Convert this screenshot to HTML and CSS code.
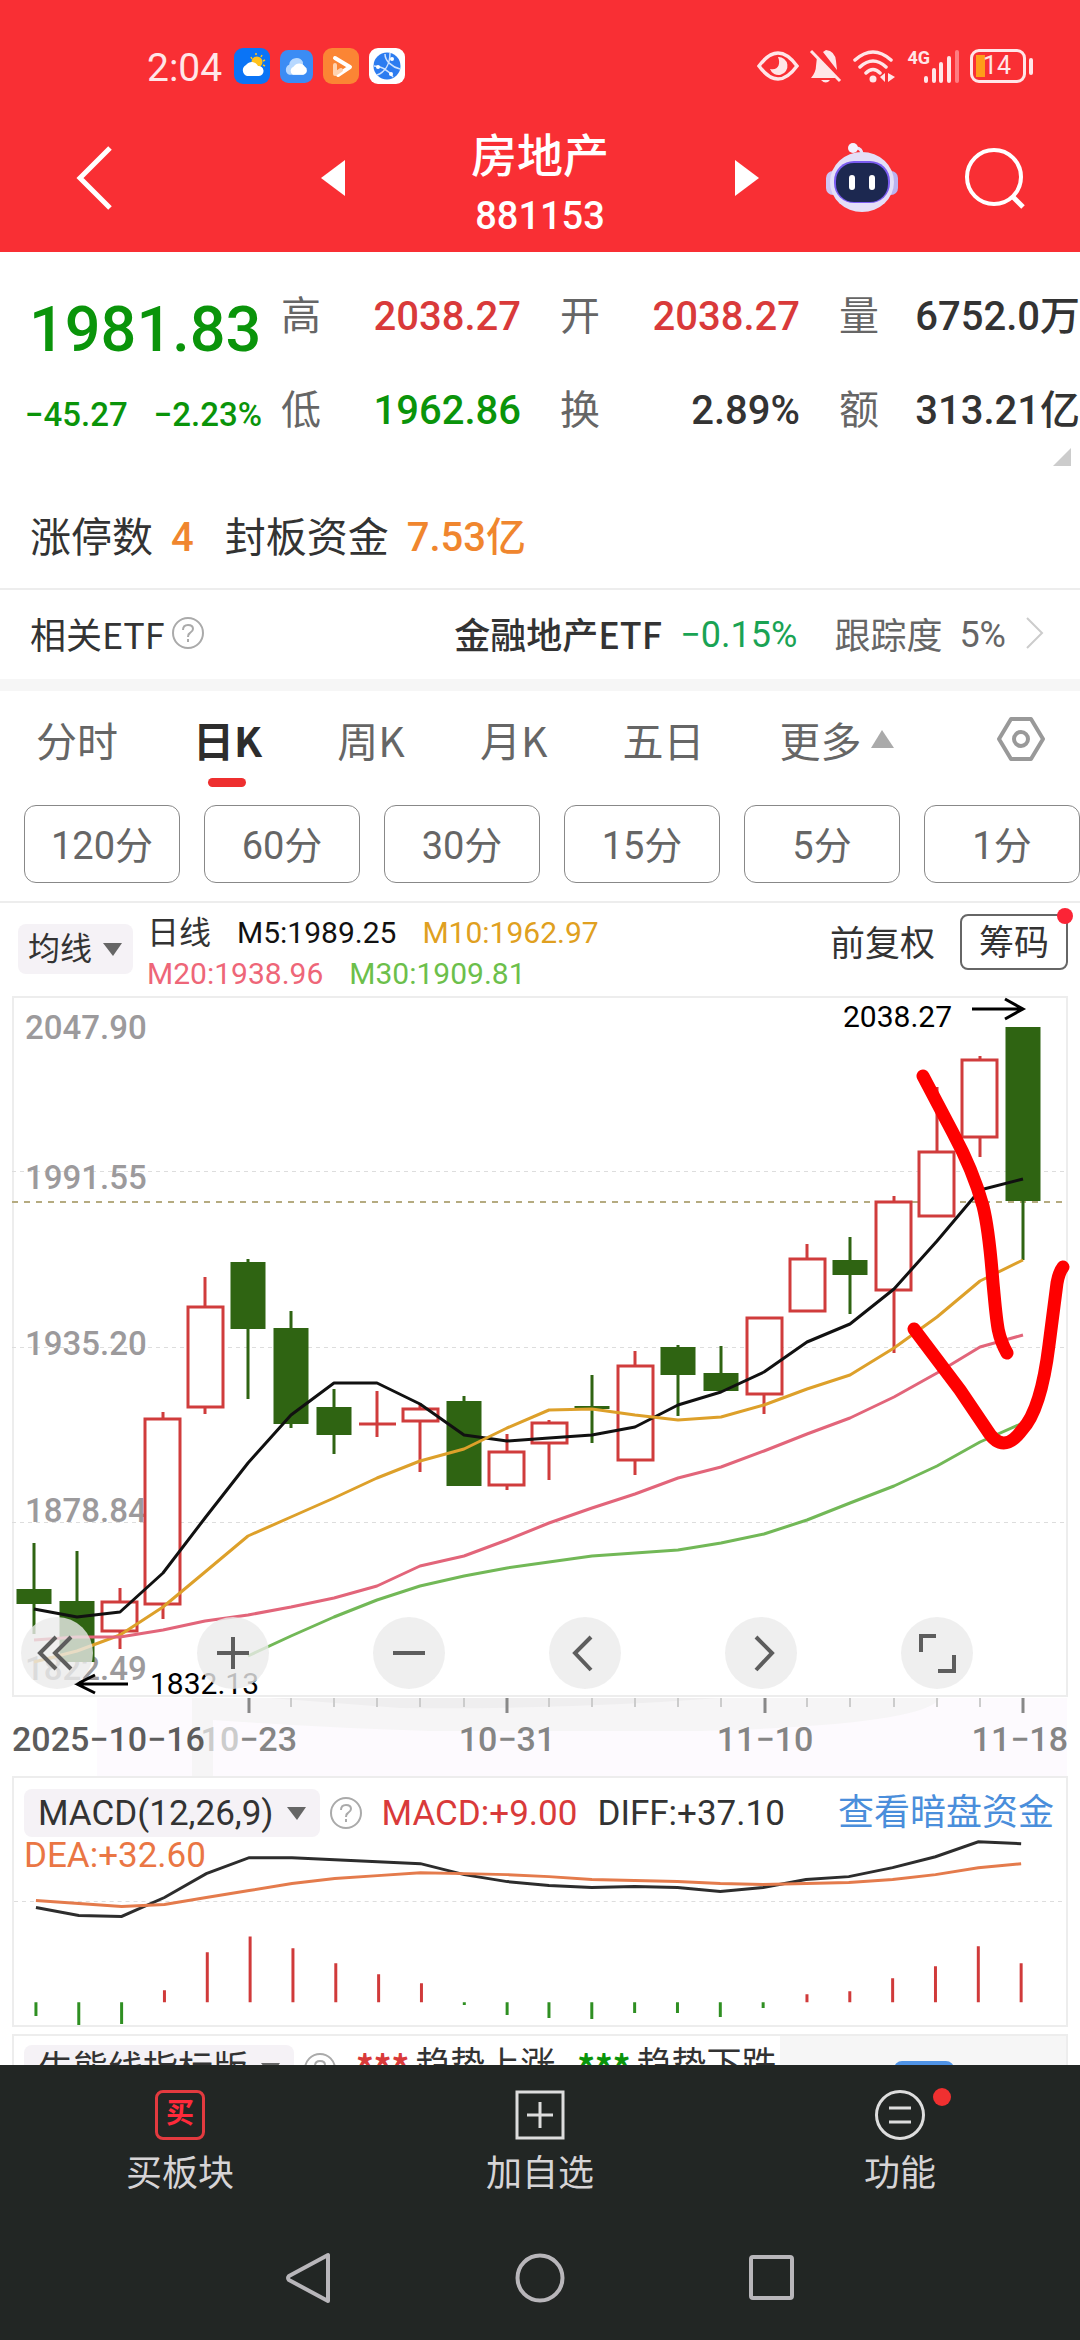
FILE: index.html
```html
<!DOCTYPE html>
<html lang="zh-CN">
<head>
<meta charset="utf-8">
<meta name="viewport" content="width=device-width, initial-scale=1">
<title>房地产 881153</title>
<link rel="stylesheet" href="styles.css">
</head>
<body>
<header class="top">
  <div class="status">
    <div class="status-left">
      <span class="clock">2:04</span>
      <svg class="app" viewBox="0 0 36 36"><rect width="36" height="36" rx="9" fill="#0a74f6"/><circle cx="23" cy="14" r="5.500" fill="#ffc21c"/><path d="M17 9l1 2M22 5v2M28 7l-1 2M31 12l-2 1M31 18l-2-1" stroke="#ffc21c" stroke-width="1.500"/><path d="M13 28a6 6 0 0 1-1-11 7 7 0 0 1 12 1 5 5 0 1 1 1 10z" fill="#fff"/></svg>
      <svg class="app app-small" viewBox="0 0 36 36"><rect width="36" height="36" rx="9" fill="#3b8cf4"/><path d="M10 27a6 6 0 0 1 0-11 8 8 0 0 1 15-3v14z" fill="#b7d8ff"/><path d="M14 27a5 5 0 0 1 1-9 7 7 0 0 1 12 0 5 5 0 0 1-1 9z" fill="#fff"/></svg>
      <svg class="app" viewBox="0 0 36 36"><rect width="36" height="36" rx="9" fill="#fb8534"/><path d="M12 10l15 9-12 8" fill="none" stroke="#fff" stroke-width="4" stroke-linecap="round" stroke-linejoin="round"/><path d="M12 17v9l6-4" fill="none" stroke="#ffd3b0" stroke-width="4" stroke-linecap="round" stroke-linejoin="round"/></svg>
      <svg class="app" viewBox="0 0 36 36"><rect width="36" height="36" rx="9" fill="#fff"/><circle cx="18" cy="18" r="13.500" fill="#2c7cf0"/><path d="M5 18c8 0 14 4 19 11M8 27c8-3 13-11 13-22M16 6c0 7 7 13 15 15" fill="none" stroke="#cfe3ff" stroke-width="1.500"/><circle cx="23" cy="11" r="2" fill="#fff"/><circle cx="9" cy="19" r="2" fill="#fff"/><circle cx="22" cy="26" r="2" fill="#fff"/></svg>
    </div>
    <div class="status-right">
      <svg width="42" height="36" viewBox="0 0 42 36"><path d="M2 18q19-26 38 0q-19 26-38 0z" fill="none" stroke="#ffe6e8" stroke-width="3.500"/><path d="M21 9a9 9 0 1 1-8 12c8 2 11-5 8-12z" fill="#ffe6e8"/></svg>
      <svg width="34" height="36" viewBox="0 0 34 36"><path d="M17 2q9 1 10 11l1 9-14-18zM8 9l20 21H2q5-6 5-12z" fill="#ffe6e8"/><path d="M2 3l29 30" stroke="#ffe6e8" stroke-width="3"/><path d="M12 32h9q-4 5-9 0z" fill="#ffe6e8"/></svg>
      <svg width="44" height="36" viewBox="0 0 44 36"><path d="M2 12q18-16 36 0M7 19q13-12 26 0M13 25q7-7 14 0" fill="none" stroke="#ffe6e8" stroke-width="3.500" stroke-linecap="round"/><circle cx="20" cy="31" r="3.500" fill="#ffe6e8"/><path d="M32 25v9l-5-5zM35 25v9l7-5z" fill="#ffe6e8"/></svg>
      <div class="signal"><span class="net">4G</span><svg width="36" height="36" viewBox="0 0 36 36"><path d="M2 30v3M10 22v11M17 16v17M25 10v23" stroke="#ffe6e8" stroke-width="4" stroke-linecap="round"/><path d="M33 4v29" stroke="#ff7d82" stroke-width="4" stroke-linecap="round"/></svg></div>
      <div class="battery"><span>14</span></div>
    </div>
  </div>
  <nav class="title-bar">
    <div class="side">
      <button class="icon-btn" aria-label="返回"><svg width="37" height="66" viewBox="0 0 37 66"><path d="M34 3L4 33l30 30" fill="none" stroke="#fff" stroke-width="5"/></svg></button>
      <button class="icon-btn" aria-label="上一个"><svg width="24" height="36" viewBox="0 0 24 36"><path d="M24 0v36L0 18z" fill="#fff"/></svg></button>
    </div>
    <div class="heading"><h1>房地产</h1><span>881153</span></div>
    <div class="side">
      <button class="icon-btn" aria-label="下一个"><svg width="24" height="36" viewBox="0 0 24 36"><path d="M0 0v36l24-18z" fill="#fff"/></svg></button>
      <button class="icon-btn" aria-label="智能助手"><svg width="74" height="70" viewBox="0 0 74 70"><path d="M37 12q0-7-6-7" fill="none" stroke="#e9e4fb" stroke-width="3"/><circle cx="28" cy="5" r="5" fill="#f4f1ff"/><rect x="1" y="28" width="14" height="24" rx="7" fill="#cfc5f4"/><rect x="59" y="28" width="14" height="24" rx="7" fill="#b9b3f0"/><ellipse cx="37" cy="39" rx="32" ry="30" fill="#e4dff8"/><rect x="9" y="18" width="56" height="42" rx="20" fill="#7a5cf0"/><rect x="11" y="20" width="52" height="39" rx="18" fill="#1c2850"/><path d="M27 35v9M47 35v9" stroke="#fff" stroke-width="6" stroke-linecap="round"/></svg></button>
      <button class="icon-btn" aria-label="搜索"><svg width="62" height="62" viewBox="0 0 62 62"><circle cx="30" cy="30" r="27" fill="none" stroke="#fff" stroke-width="4"/><path d="M49 50l10 10" stroke="#fff" stroke-width="5"/></svg></button>
    </div>
  </nav>
</header>

<main class="content">
  <section class="quote">
    <div class="last"><strong>1981.83</strong><div class="change"><span>−45.27</span><span>−2.23%</span></div></div>
    <dl class="stats">
      <div><dt>高</dt><dd class="up">2038.27</dd></div>
      <div><dt>开</dt><dd class="up">2038.27</dd></div>
      <div><dt>量</dt><dd>6752.0万</dd></div>
      <div><dt>低</dt><dd class="down">1962.86</dd></div>
      <div><dt>换</dt><dd>2.89%</dd></div>
      <div><dt>额</dt><dd>313.21亿</dd></div>
    </dl>
    <svg class="corner" width="18" height="18" viewBox="0 0 18 18"><path d="M18 0v18H0z" fill="#ccc"/></svg>
  </section>
  <section class="limit"><span>涨停数</span><b>4</b><span class="second">封板资金</span><b>7.53亿</b></section>
  <a class="etf" href="#etf">
    <span>相关ETF</span>
    <svg class="help" viewBox="0 0 34 34"><circle cx="17" cy="17" r="15" fill="none" stroke="#aaa" stroke-width="2"/><path d="M12 14q0-5 5-5t5 4q0 2-3 4-2 1-2 4M17 23v3" fill="none" stroke="#aaa" stroke-width="2"/></svg>
    <span class="etf-name">金融地产ETF</span><span class="etf-change">−0.15%</span><span class="etf-track">跟踪度</span><span class="etf-rate">5%</span>
    <svg width="18" height="32" viewBox="0 0 18 32"><path d="M1 1l15 15L1 31" fill="none" stroke="#ccc" stroke-width="2"/></svg>
  </a>
  <section class="periods">
    <div class="tabs">
      <div class="tab-list">
        <button>分时</button><button class="active">日K</button><button>周K</button><button>月K</button><button>五日</button><button>更多<svg width="23" height="18" viewBox="0 0 23 18"><path d="M11 0l12 18H0z" fill="#aaa"/></svg></button>
      </div>
      <button class="icon-btn" aria-label="设置"><svg width="48" height="46" viewBox="0 0 48 46"><path d="M14 3h20l12 20-12 20H14L2 23z" fill="none" stroke="#999" stroke-width="4" stroke-linejoin="round"/><circle cx="24" cy="23" r="7" fill="none" stroke="#999" stroke-width="4"/></svg></button>
    </div>
    <div class="minutes"><button>120分</button><button>60分</button><button>30分</button><button>15分</button><button>5分</button><button>1分</button></div>
  </section>

  <section class="indicator">
    <button class="chip">均线<svg width="19" height="13" viewBox="0 0 19 13"><path d="M0 0h19l-9 13z" fill="#666"/></svg></button>
    <div class="averages"><div><span class="cn">日线</span><span class="m5">M5:1989.25</span><span class="m10">M10:1962.97</span></div><div><span class="m20">M20:1938.96</span><span class="m30">M30:1909.81</span></div></div>
    <span class="adjust">前复权</span>
    <button class="chips-btn">筹码</button>
  </section>

  <section class="plot">
    <svg class="kline" viewBox="12 996 1056 702">
      <rect x="13" y="997" width="1054" height="699" fill="#fff" stroke="#ededed" stroke-width="2"/>
      <g stroke="#ddd" stroke-dasharray="4 4"><path d="M12 1171.500H1067M12 1347.500H1067M12 1522.500H1067"/></g>
      <path d="M12 1202H1067" stroke="#b5ab80" stroke-width="2" stroke-dasharray="6 6"/>
      <g class="axis-text"><text x="25" y="1039">2047.90</text><text x="25" y="1189">1991.55</text><text x="25" y="1355">1935.20</text><text x="25" y="1522">1878.84</text><text x="25" y="1680">1822.49</text></g>
      <path class="wick-down" d="M34 1543V1634M77 1551V1662M248 1259V1399M291 1311V1428M334 1389V1454M464 1396V1486M592 1375V1443M678 1345V1416M721 1346V1391M850 1237V1314M1023 1027V1260"/>
      <path class="body-down" d="M34 1589V1604M77 1601V1662M248 1262V1329M291 1328V1424M334 1407V1435M464 1401V1486M592 1406V1409M678 1347V1375M721 1373V1391M850 1260V1275M1023 1027V1201"/>
      <path class="up-line" d="M120 1588V1649M163 1412V1619M205 1277V1414M377 1391V1437M359 1424H396M420 1403V1472M507 1434V1490M549 1420V1480M635 1351V1475M764 1318V1414M807 1244V1311M894 1196V1353M937 1087V1216M980 1056V1157"/>
      <path class="up-line up-body" d="M102 1602h35v29h-35zM145 1419h35v185h-35zM188 1307h35v100h-35zM403 1409h35v12h-35zM489 1452h35v33h-35zM532 1423h35v20h-35zM618 1366h35v94h-35zM747 1318h35v76h-35zM790 1259h35v52h-35zM876 1202h35v88h-35zM919 1152h35v64h-35zM962 1060h35v77h-35z"/>
      <g class="average">
        <polyline stroke="#111" points="34,1609 77,1617 120,1612 163,1573 205,1518 248,1463 291,1415 334,1383 377,1383 420,1404 464,1435 507,1441 549,1438 592,1435 635,1427 678,1405 721,1392 764,1372 807,1342 850,1324 894,1289 937,1241 980,1190 1023,1179"/>
        <polyline stroke="#dda02a" points="34,1662 77,1651 120,1635 163,1607 205,1572 248,1536 291,1517 334,1498 377,1478 420,1461 464,1449 507,1428 549,1410 592,1409 635,1415 678,1420 721,1417 764,1405 807,1389 850,1375 894,1348 937,1317 980,1281 1023,1260"/>
        <polyline stroke="#e2657a" points="34,1640 77,1637 120,1637 163,1630 205,1621 248,1615 291,1607 334,1598 377,1586 420,1566 464,1556 507,1540 549,1523 592,1508 635,1494 678,1478 721,1467 764,1451 807,1434 850,1418 894,1397 937,1373 980,1347 1023,1335"/>
        <polyline stroke="#72b857" points="248,1656 291,1636 334,1617 377,1600 420,1586 464,1576 507,1568 549,1562 592,1556 635,1553 678,1550 721,1543 764,1534 807,1520 850,1503 894,1486 937,1466 980,1442 1023,1423"/>
      </g>
      <g class="mark-text"><text x="843" y="1027">2038.27</text><text x="150" y="1694">1832.13</text></g>
      <path d="M972 1009h50M1005 999l18 10-18 10M128 1684H78M95 1675l-18 9 18 9" fill="none" stroke="#000" stroke-width="3"/>
      <g class="pen"><path d="M923 1076L953 1133Q973 1170 983 1206Q989 1230 993 1283C997 1325 997 1335 1007 1353"/><path d="M914 1329L960 1390L987 1430Q1003 1456 1022 1430Q1041 1410 1049 1345L1057 1283Q1059 1272 1063 1267"/></g>
    </svg>
    <div class="tools">
      <button aria-label="最早"><svg viewBox="0 0 72 72"><path d="M35 20L19 36l16 16M50 20L34 36l16 16"/></svg></button>
      <button aria-label="放大"><svg viewBox="0 0 72 72"><path d="M36 20v32M20 36h32"/></svg></button>
      <button aria-label="缩小"><svg viewBox="0 0 72 72"><path d="M20 36h32"/></svg></button>
      <button aria-label="向左"><svg viewBox="0 0 72 72"><path d="M42 20L26 36l16 17"/></svg></button>
      <button aria-label="向右"><svg viewBox="0 0 72 72"><path d="M31 20l16 16-16 17"/></svg></button>
      <button aria-label="全屏"><svg viewBox="0 0 72 72"><path d="M35 19H20v16M53 38v16H37"/></svg></button>
    </div>
  </section>
  <svg class="dates" viewBox="0 1698 1080 78">
    <path d="M97 1698H1067V1776H97z" fill="#fdfafe"/>
    <path d="M192 1698H940Q925 1725 700 1731H430Q330 1728 213 1720V1776H192z" fill="#f6f5f6"/>
    <path d="M270 1698H720Q560 1710 400 1708Z" fill="#efeeef"/>
    <path d="M291 1698v9M334 1698v9M377 1698v9M420 1698v9M464 1698v9M549 1698v9M592 1698v9M635 1698v9M678 1698v9M721 1698v9M807 1698v9M850 1698v9M894 1698v9M937 1698v9M980 1698v9" stroke="#ccc" stroke-width="2"/>
    <path d="M249 1698v15M507 1698v15M765 1698v15M1023 1698v15" stroke="#888" stroke-width="3"/>
    <g class="axis-text date-text"><text class="first" x="12" y="1751">2025−10−16</text><text x="297" y="1751" text-anchor="end"><tspan class="faded">10</tspan>−23</text><text x="507" y="1751" text-anchor="middle">10−31</text><text x="765" y="1751" text-anchor="middle">11−10</text><text x="1068" y="1751" text-anchor="end">11−18</text></g>
  </svg>

  <section class="panel macd">
    <svg class="macd-plot" viewBox="12 1778 1056 248">
      <path d="M12 1902H1067" stroke="#ddd" stroke-dasharray="4 4"/>
      <path d="M34 2003V2017M77 2003V2027M120 2003V2025M464 2003V2006M507 2003V2016M549 2003V2019M592 2003V2020M635 2003V2014M678 2003V2014M721 2003V2018M764 2003V2009" stroke="#2f8f22" stroke-width="3"/>
      <path d="M163 2003V1991M206 2003V1953M249 2003V1937M292 2003V1949M335 2003V1964M378 2003V1975M421 2003V1984M808 2003V1995M851 2003V1992M894 2003V1979M937 2003V1967M980 2003V1947M1023 2003V1964" stroke="#d03a3a" stroke-width="3"/>
      <polyline fill="none" stroke="#2d2d2d" stroke-width="3" points="34,1908 77,1916 120,1917 163,1898 205,1874 248,1858 291,1858 334,1860 377,1862 420,1864 464,1875 507,1882 549,1886 592,1888 635,1887 678,1888 721,1892 764,1888 807,1880 850,1877 894,1868 937,1857 980,1842 1023,1844"/>
      <polyline fill="none" stroke="#e47b4c" stroke-width="3" points="34,1901 77,1904 120,1907 163,1905 205,1898 248,1891 291,1884 334,1879 377,1876 420,1873 464,1874 507,1875 549,1877 592,1880 635,1881 678,1882 721,1884 764,1885 807,1884 850,1883 894,1880 937,1875 980,1868 1023,1864"/>
    </svg>
    <div class="macd-head">
      <div class="macd-row">
        <button class="chip chip-wide">MACD(12,26,9)<svg width="19" height="13" viewBox="0 0 19 13"><path d="M0 0h19l-9 13z" fill="#666"/></svg></button>
        <svg class="help" viewBox="0 0 34 34"><circle cx="17" cy="17" r="15" fill="none" stroke="#aaa" stroke-width="2"/><path d="M12 14q0-5 5-5t5 4q0 2-3 4-2 1-2 4M17 23v3" fill="none" stroke="#aaa" stroke-width="2"/></svg>
        <span class="up">MACD:+9.00</span><span>DIFF:+37.10</span>
        <a href="#dark">查看暗盘资金</a>
      </div>
      <span class="dea">DEA:+32.60</span>
    </div>
  </section>
  <section class="panel trend">
    <div class="trend-main">
      <button class="chip chip-wide">牛熊线指标版<svg width="19" height="13" viewBox="0 0 19 13"><path d="M0 0h19l-9 13z" fill="#666"/></svg></button>
      <svg class="help" viewBox="0 0 34 34"><circle cx="17" cy="17" r="15" fill="none" stroke="#aaa" stroke-width="2"/><path d="M12 14q0-5 5-5t5 4q0 2-3 4-2 1-2 4M17 23v3" fill="none" stroke="#aaa" stroke-width="2"/></svg>
      <span class="legend"><i class="up">***</i>趋势上涨</span><span class="legend"><i class="down">***</i>趋势下跌</span>
    </div>
    <div class="trend-side"><span class="badge"></span></div>
  </section>
</main>

<footer class="bottom">
  <nav class="actions">
    <button><span class="buy">买</span>买板块</button>
    <button><svg width="50" height="50" viewBox="0 0 50 50"><path d="M2 2h46v46H2zM25 12v26M12 25h26" fill="none" stroke="#ddd" stroke-width="3"/></svg>加自选</button>
    <button><span class="func"><svg width="50" height="50" viewBox="0 0 50 50"><circle cx="25" cy="25" r="23.500" fill="none" stroke="#ddd" stroke-width="3"/><path d="M14 18h22M14 32h22" stroke="#ddd" stroke-width="3"/></svg></span>功能</button>
  </nav>
  <nav class="system">
    <button class="icon-btn" aria-label="后退"><svg width="48" height="52" viewBox="0 0 48 52"><path d="M43 3v46L4 28q-2-2 0-4z" fill="none" stroke="#b8b6ba" stroke-width="4" stroke-linejoin="round"/></svg></button>
    <button class="icon-btn" aria-label="主页"><svg width="52" height="52" viewBox="0 0 52 52"><circle cx="26" cy="26" r="22.500" fill="none" stroke="#b8b6ba" stroke-width="4"/></svg></button>
    <button class="icon-btn" aria-label="最近任务"><svg width="48" height="52" viewBox="0 0 48 52"><rect x="4" y="5" width="41" height="41" rx="2" fill="none" stroke="#b8b6ba" stroke-width="4"/></svg></button>
  </nav>
</footer>
</body>
</html>
```
FILE: styles.css
```css
* { box-sizing: border-box; }
body {
  margin: 0;
  height: 100vh;
  display: flex;
  flex-direction: column;
  background: #fff;
  color: #333;
  font-family: Roboto, "Noto Sans CJK SC", sans-serif;
  font-size: 36px;
  line-height: 1;
  white-space: nowrap;
}
button { border: 0; padding: 0; background: none; font: inherit; color: inherit; white-space: nowrap; }
a { color: inherit; text-decoration: none; }
svg { display: block; flex: none; }
.icon-btn { display: flex; }
.up { color: #d93a3a; }
.down { color: #0a940a; }

/* header */
.top { background: #f92f34; color: #fff; }
.status { height: 112px; padding: 20px 46px 0 147px; display: flex; justify-content: space-between; align-items: center; color: #ffe6e8; }
.status-left, .status-right { display: flex; align-items: center; gap: 10px; }
.clock { font-size: 39px; margin-right: 2px; padding-top: 4px; }
.app { width: 36px; height: 36px; }
.app-small { width: 33px; height: 33px; }
.signal { display: flex; align-items: flex-start; }
.net { font-size: 18px; font-weight: 700; line-height: 20px; margin-right: -6px; }
.battery { position: relative; width: 56px; height: 34px; margin-right: 8px; border: 3px solid #ffe6e8; border-radius: 9px; font-size: 25px; line-height: 28px; text-align: right; padding-right: 12px; background: linear-gradient(#ff9c1a, #ff9c1a) 3px 3px / 9px 22px no-repeat; }
.battery::after { content: ""; position: absolute; right: -10px; top: 6px; width: 4px; height: 17px; border-radius: 2px; background: #ffe6e8; }
.title-bar { height: 140px; padding: 0 54px 0 76px; display: grid; grid-template-columns: minmax(0, 269px) 1fr minmax(0, 291px); align-items: center; }
.side { display: flex; align-items: center; justify-content: space-between; padding-bottom: 8px; }
.heading { display: flex; flex-direction: column; align-items: center; gap: 18px; padding-top: 4px; font-size: 38px; font-weight: 500; }
.heading h1 { margin: 0; font-size: 46px; font-weight: 500; }

/* quote */
.content { flex: 1; min-height: 0; overflow: hidden; }
.quote { position: relative; height: 236px; display: grid; grid-template-columns: 281px 1fr; }
.last { padding: 46px 0 0 29px; color: #0a940a; }
.last strong { display: block; font-size: 63px; line-height: 64px; font-weight: 500; }
.change { display: flex; gap: 26px; margin: 36px 0 0 -4px; font-size: 33px; font-weight: 500; }
.stats { margin: 0; padding-top: 44px; display: grid; grid-template-columns: 240px 240px 1fr; column-gap: 39px; row-gap: 52px; align-content: start; font-size: 40px; line-height: 42px; }
.stats div { display: flex; justify-content: space-between; }
.stats dt { color: #666; }
.stats dd { margin: 0; font-weight: 500; }
.corner { position: absolute; right: 9px; bottom: 22px; }
.limit { height: 100px; padding: 0 30px; display: flex; align-items: center; font-size: 41px; }
.limit b { font-weight: 500; font-size: 40px; color: #f0862e; margin-left: 18px; }
.limit .second { margin-left: 31px; }
.etf { height: 103px; border-top: 2px solid #ededed; padding: 5px 36px 9px 30px; display: flex; align-items: center; border-bottom: 12px solid #f6f6f6; font-family: "Noto Sans CJK SC", Roboto, sans-serif; }
.help { width: 34px; height: 34px; margin-left: 6px; }
.etf-name { margin-left: auto; font-weight: 500; }
.etf-change, .etf-rate { font-family: Roboto, sans-serif; padding-top: 5px; }
.etf-change { color: #1aa354; margin-left: 18px; }
.etf-track { margin-left: 37px; color: #666; }
.etf-rate { margin: 0 20px 0 17px; color: #666; }

/* periods */
.periods { border-bottom: 2px solid #ededed; padding-bottom: 18px; color: #666; }
.tabs { height: 114px; padding: 0 35px 18px 36px; display: flex; align-items: center; justify-content: space-between; font-size: 41px; font-family: "Noto Sans CJK SC", sans-serif; }
.tab-list { width: 85%; display: flex; justify-content: space-between; }
.tab-list button { display: flex; align-items: center; gap: 9px; position: relative; }
.tab-list .active { font-weight: 700; color: #2d2d2d; }
.active::after { content: ""; position: absolute; left: 15px; right: 16px; top: 59px; height: 9px; border-radius: 5px; background: #ee2f2f; }
.minutes { padding-left: 24px; display: grid; grid-template-columns: repeat(6, 1fr); gap: 24px; }
.minutes button { height: 78px; border: 1px solid #888; border-radius: 12px; padding-top: 4px; font-size: 38px; }

/* moving averages */
.indicator { height: 93px; padding: 0 12px 0 18px; display: flex; align-items: flex-start; }
.chip { display: flex; align-items: center; gap: 11px; height: 50px; padding: 0 11px 0 10px; border-radius: 8px; background: #f5f2f6; font-size: 32px; margin-top: 21px; }
.averages { margin-left: 14px; padding-top: 9px; font-size: 30px; }
.averages div { display: flex; align-items: center; gap: 26px; height: 41px; }
.cn { font-size: 32px; }
.m5 { color: #111; }
.m10 { color: #e0a020; }
.m20 { color: #ee6678; }
.m30 { color: #6cbf4b; }
.adjust { margin: 24px 25px 0 auto; font-size: 35px; }
.chips-btn { position: relative; width: 108px; height: 56px; margin-top: 11px; padding-top: 2px; border: 2px solid #666; border-radius: 8px; font-size: 35px; }
.chips-btn::after { content: ""; position: absolute; right: -7px; top: -8px; width: 16px; height: 16px; border-radius: 50%; background: #fb2436; }

/* charts */
.plot { margin: 0 12px; display: grid; }
.kline, .tools { grid-area: 1 / 1; }
.kline { width: 100%; height: auto; overflow: visible; }
.axis-text { font-size: 33px; font-weight: 500; fill: #9c9a9c; }
.date-text { font-size: 34px; fill: #858585; }
.first { fill: #5c5c5c; }
.faded { fill: #ccc; }
.mark-text { font-size: 30px; fill: #000; }
.wick-down { stroke: #2f6412; stroke-width: 3; }
.body-down { stroke: #2f6412; stroke-width: 35; }
.up-line { stroke: #d03c3c; stroke-width: 3; fill: none; }
.up-body { fill: #fff; }
.average polyline { fill: none; stroke-width: 3; stroke-linejoin: round; }
.pen path { fill: none; stroke: #fe0000; stroke-width: 13; stroke-linecap: round; stroke-linejoin: round; }
.tools { align-self: end; display: flex; justify-content: space-between; padding: 0 95px 9px 9px; }
.tools button { width: 72px; height: 72px; border-radius: 50%; background: rgba(235, 235, 235, .8); }
.tools path { fill: none; stroke: #5d5d5d; stroke-width: 4; }
.dates { width: 100%; height: auto; }
.panel { margin: 0 12px; border: 2px solid #ededed; }
.macd { display: grid; }
.macd-plot, .macd-head { grid-area: 1 / 1; }
.macd-plot { width: 100%; height: auto; }
.macd-head { padding: 0 12px 0 10px; font-size: 35px; }
.macd-row { display: flex; align-items: center; height: 60px; padding-top: 10px; }
.chip-wide { height: 48px; margin: 0; padding: 0 14px; font-size: 35px; gap: 13px; }
.macd-row .help { margin: 0 19px 0 9px; }
.macd-row .up { margin-right: 20px; }
.macd-row a { margin-left: auto; color: #4a8edb; font-size: 36px; }
.dea { display: block; color: #ea7644; }
.trend { margin-top: 7px; display: grid; grid-template-columns: 766px 1fr; height: 80px; }
.trend-main { display: flex; align-items: center; padding: 0 0 10px 10px; font-size: 35px; }
.trend-main .help { margin: 0 19px 0 9px; }
.legend { display: flex; gap: 6px; margin-right: 22px; padding-bottom: 8px; }
.legend i { font-style: normal; font-weight: 700; font-family: "Noto Sans CJK SC", sans-serif; }
.trend-side { background: #f6f6f6; padding: 25px 0 0 114px; }
.badge { display: block; width: 60px; height: 30px; border-radius: 8px; background: #4f93e6; }

/* bottom bars */
.bottom { background: #222624; color: #d6d4d6; }
.actions { display: grid; grid-template-columns: repeat(3, 1fr); padding-top: 25px; }
.actions button { display: flex; flex-direction: column; align-items: center; gap: 14px; line-height: 40px; }
.buy { width: 50px; height: 50px; border: 3px solid #e33a3f; border-radius: 8px; color: #ff2a3a; font-size: 28px; font-weight: 700; line-height: 42px; }
.func { position: relative; }
.func::after { content: ""; position: absolute; right: -26px; top: -2px; width: 18px; height: 18px; border-radius: 50%; background: #f03030; }
.system { height: 146px; padding: 22px 285px 0; display: flex; align-items: center; justify-content: space-between; }
```
